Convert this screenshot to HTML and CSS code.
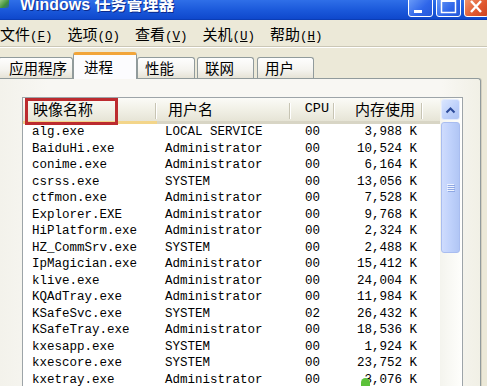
FILE: index.html
```html
<!DOCTYPE html>
<html lang="zh-CN">
<head>
    <meta charset="utf-8">
    <title>Windows 任务管理器</title>
    <link rel="stylesheet" href="styles.css">
</head>
<body>
    <div class="titlebar">
        <span class="app-icon"></span>
        <span class="title">Windows 任务管理器</span>
        <div class="caption-buttons">
            <span class="cap-btn">
                <svg width="23" height="19" viewBox="0 0 23 19"><rect x="5" y="13" width="8" height="3" fill="#fff"/></svg>
            </span>
            <span class="cap-btn">
                <svg width="23" height="19" viewBox="0 0 23 19"><rect x="4.5" y="2.5" width="14" height="13" fill="none" stroke="#fff" stroke-width="1.5"/><rect x="4" y="2" width="15" height="3" fill="#fff"/></svg>
            </span>
            <span class="cap-btn close">
                <svg width="23" height="19" viewBox="0 0 23 19"><path d="M6 4 L16 15 M16 4 L6 15" stroke="#fff" stroke-width="2.4"/></svg>
            </span>
        </div>
    </div>

    <div class="menubar">
        <span class="menu-item">文件<span class="key">(<u>F</u>)</span></span>
        <span class="menu-item">选项<span class="key">(<u>O</u>)</span></span>
        <span class="menu-item">查看<span class="key">(<u>V</u>)</span></span>
        <span class="menu-item">关机<span class="key">(<u>U</u>)</span></span>
        <span class="menu-item">帮助<span class="key">(<u>H</u>)</span></span>
    </div>

    <div class="tabs">
        <span class="tab first">应用程序</span>
        <span class="tab active">进程</span>
        <span class="tab perf">性能</span>
        <span class="tab net">联网</span>
        <span class="tab users">用户</span>
    </div>

    <div class="panel">
        <div class="listview">
            <div class="list">
                <div class="header">
                    <span class="hcell hot">映像名称<span class="mark"></span></span>
                    <span class="hcell">用户名</span>
                    <span class="hcell right cpu">CPU</span>
                    <span class="hcell right mem">内存使用</span>
                    <span class="hcell last"></span>
                </div>
                <div class="row"><span>alg.exe</span><span>LOCAL SERVICE</span><span>00</span><span class="num">3,988 K</span></div>
                <div class="row"><span>BaiduHi.exe</span><span>Administrator</span><span>00</span><span class="num">10,524 K</span></div>
                <div class="row"><span>conime.exe</span><span>Administrator</span><span>00</span><span class="num">6,164 K</span></div>
                <div class="row"><span>csrss.exe</span><span>SYSTEM</span><span>00</span><span class="num">13,056 K</span></div>
                <div class="row"><span>ctfmon.exe</span><span>Administrator</span><span>00</span><span class="num">7,528 K</span></div>
                <div class="row"><span>Explorer.EXE</span><span>Administrator</span><span>00</span><span class="num">9,768 K</span></div>
                <div class="row"><span>HiPlatform.exe</span><span>Administrator</span><span>00</span><span class="num">2,324 K</span></div>
                <div class="row"><span>HZ_CommSrv.exe</span><span>SYSTEM</span><span>00</span><span class="num">2,488 K</span></div>
                <div class="row"><span>IpMagician.exe</span><span>Administrator</span><span>00</span><span class="num">15,412 K</span></div>
                <div class="row"><span>klive.exe</span><span>Administrator</span><span>00</span><span class="num">24,004 K</span></div>
                <div class="row"><span>KQAdTray.exe</span><span>Administrator</span><span>00</span><span class="num">11,984 K</span></div>
                <div class="row"><span>KSafeSvc.exe</span><span>SYSTEM</span><span>02</span><span class="num">26,432 K</span></div>
                <div class="row"><span>KSafeTray.exe</span><span>Administrator</span><span>00</span><span class="num">18,536 K</span></div>
                <div class="row"><span>kxesapp.exe</span><span>SYSTEM</span><span>00</span><span class="num">1,924 K</span></div>
                <div class="row"><span>kxescore.exe</span><span>SYSTEM</span><span>00</span><span class="num">23,752 K</span></div>
                <div class="row"><span>kxetray.exe</span><span>Administrator</span><span>00</span><span class="num">3,076 K</span></div>
            </div>
            <div class="scrollbar">
                <div class="scroll-up">
                    <svg width="11" height="8" viewBox="0 0 11 8"><path d="M1.5 6.5 L5.5 2.5 L9.5 6.5" fill="none" stroke="#2b4a9a" stroke-width="2"/></svg>
                </div>
                <div class="thumb">
                    <span class="grip"></span>
                    <span class="grip"></span>
                    <span class="grip"></span>
                    <span class="grip"></span>
                </div>
            </div>
        </div>
    </div>

    <span class="cursor"></span>
</body>
</html>
```

FILE: styles.css
```css
body {
    margin: 0;
    width: 487px;
    height: 386px;
    overflow: hidden;
    position: relative;
    background-color: #ece9d8;
    font-family: "Noto Sans CJK SC", sans-serif;
    color: #000;
}

/* title bar, cut off at the top */
.titlebar {
    height: 19px;
    display: flex;
    align-items: flex-start;
    background: linear-gradient(#2f6fe8, #1a58da 55%, #0f48cc);
    border-bottom: 1px solid #0b3db6;
}

.app-icon {
    width: 9px;
    height: 9px;
    margin-top: -1px;
    background: linear-gradient(135deg, #9fd08a, #3f8f3a 60%, #2b5ea8);
    border-radius: 0 0 2px 0;
}

.title {
    margin: -3px 0 0 11px;
    font: bold 16px/16px "Liberation Sans", "Noto Sans CJK SC", sans-serif;
    color: #fff;
    text-shadow: 1px 1px #0c2a8c;
    white-space: nowrap;
}

.caption-buttons {
    margin: -4px -2px 0 auto;
    display: flex;
    gap: 3px;
}

.cap-btn {
    width: 25px;
    height: 21px;
    box-sizing: border-box;
    border: 1px solid #fff;
    border-radius: 3px;
    background: linear-gradient(135deg, #6fa0f8, #2f66ea 60%, #2458d8);
    display: block;
}

.cap-btn svg {
    display: block;
}

.cap-btn.close {
    background: linear-gradient(135deg, #f29b74, #e0582e 60%, #cc4320);
}

/* menu */
.menubar {
    height: 26px;
    display: flex;
    align-items: center;
    font-size: 15px;
    border-bottom: 1px solid #cbc7b6;
    box-shadow: 0 1px #fff;
}

.menu-item {
    width: 67.5px;
    white-space: nowrap;
}

.key {
    font-family: "Liberation Mono", monospace;
    font-size: 12.5px;
}

/* tabs */
.tabs {
    height: 30px;
    margin-top: 1px;
    display: flex;
    align-items: flex-end;
}

.tab {
    height: 21px;
    box-sizing: border-box;
    border: 1px solid #919b9c;
    border-bottom: none;
    border-radius: 3px 3px 0 0;
    background: linear-gradient(#fefefe, #f4f3ee 60%, #e6e3d6);
    font-size: 14.5px;
    line-height: 19px;
    padding-left: 7px;
    white-space: nowrap;
}

.tab.first {
    width: 75px;
    margin-left: -2px;
    padding-left: 10px;
}

.tab.active {
    width: 64px;
    height: 27px;
    margin-bottom: -1px;
    position: relative;
    z-index: 1;
    padding: 2px 0 0 10px;
    background: #fcfcfe;
    border-top: 3px solid #f2a53a;
}

.tab.perf {
    width: 58px;
}

.tab.net {
    width: 57px;
    margin-left: 2px;
}

.tab.users {
    width: 57px;
    margin-left: 3px;
}

/* tab page */
.panel {
    width: 481px;
    height: 320px;
    box-sizing: border-box;
    border-top: 1px solid #919b9c;
    border-right: 1px solid #919b9c;
    border-radius: 0 3px 0 0;
    background: linear-gradient(90deg, #f3f2eb, #f8f7f3 10%, #f8f7f3 92%, #f1f0e6);
    padding: 18px 17px 0 22px;
    box-shadow: 1px 0 #d4d0c0;
}

.listview {
    display: flex;
    height: 300px;
    border: 1px solid #9da4a8;
    background-color: #fff;
}

.list {
    width: 417px;
}

.header,
.row {
    display: grid;
    grid-template-columns: 134px 134px 44px 88px 17px;
}

.header {
    height: 26px;
}

.hcell {
    position: relative;
    font-size: 15px;
    line-height: 22px;
    padding-left: 10px;
    white-space: nowrap;
    border-bottom: 3px solid #d8d5c5;
    background:
        linear-gradient(#c7c4b3, #c7c4b3) right 1px top 5px / 1px 16px no-repeat,
        linear-gradient(#fff, #fff) right 0 top 5px / 1px 16px no-repeat,
        linear-gradient(#fbfbf7, #efeee3 60%, #e6e4d6);
}

.hcell.hot {
    border-bottom-color: #f3d58a;
}

.hcell:nth-child(2) {
    padding-left: 11px;
}

.hcell.right {
    text-align: right;
    padding-left: 0;
}

.hcell.cpu {
    font-family: "Liberation Mono", monospace;
    font-size: 13.5px;
    padding-right: 6px;
}

.hcell.mem {
    padding-right: 8px;
}

.hcell.last {
    background: linear-gradient(#fbfbf7, #efeee3 60%, #e6e4d6);
}

/* red highlight drawn over the first header */
.mark {
    position: absolute;
    left: 2px;
    top: 0;
    width: 93px;
    height: 27px;
    box-sizing: border-box;
    border: 3px solid #bc2b2f;
}

.row {
    height: 16.5px;
    font-family: "Liberation Mono", monospace;
    font-size: 12.5px;
    line-height: 16.5px;
    white-space: nowrap;
}

.row span:nth-child(1) {
    padding-left: 9px;
}

.row span:nth-child(2) {
    padding-left: 8px;
}

.row span:nth-child(3) {
    padding-left: 14px;
}

.row .num {
    text-align: right;
    padding-right: 6px;
}

/* scrollbar */
.scrollbar {
    width: 21px;
    box-sizing: border-box;
    padding: 1px 1px 0 1px;
    background: linear-gradient(90deg, #f4f4ee, #fefefb);
}

.scroll-up {
    height: 21px;
    box-sizing: border-box;
    border: 1px solid #e3ebfd;
    border-radius: 3px;
    background: linear-gradient(135deg, #dae6fe, #bccffa 60%, #aec4f4);
    display: flex;
    align-items: center;
    justify-content: center;
}

.thumb {
    height: 131px;
    margin-top: 2px;
    box-sizing: border-box;
    border: 1px solid #a9bdf0;
    border-radius: 3px;
    background: linear-gradient(90deg, #cfdcfd, #bfd1fb 50%, #b1c6f5);
    display: flex;
    flex-direction: column;
    align-items: center;
    justify-content: center;
    gap: 1px;
}

.grip {
    width: 7px;
    height: 1px;
    background-color: #eef3fe;
    box-shadow: 1px 1px #8fa8e4;
}

/* mouse pointer poking in at the bottom */
.cursor {
    position: absolute;
    left: 361px;
    top: 378px;
    width: 9px;
    height: 12px;
    background: #5cc13a;
    border-radius: 5px 5px 2px 2px;
}
```
